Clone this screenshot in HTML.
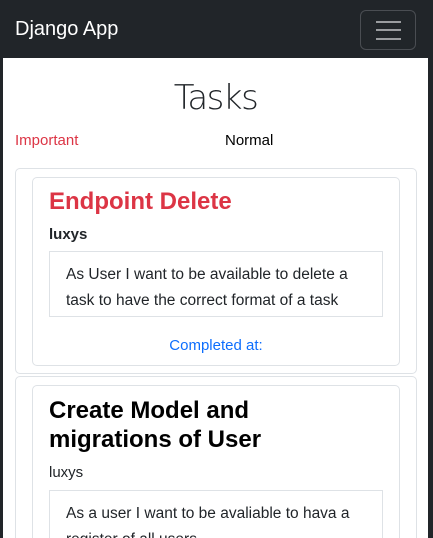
<!DOCTYPE html>
<html><head><style>
*{box-sizing:border-box;margin:0;padding:0}
html,body{width:433px;height:538px;overflow:hidden;background:#212529;font-family:"Liberation Sans",sans-serif}
.nav{height:58px;position:relative}
.brand{position:absolute;left:15px;top:18px;color:#fff;font-size:20px}
.tog{position:absolute;left:360px;top:10px;width:56px;height:40px;border:1px solid #4a4d52;border-radius:6px}
.tog i{position:absolute;left:15px;width:25px;height:2px;background:#9a9c9f}
.main{position:absolute;left:3px;top:58px;width:425px;height:480px;background:#fff;overflow:hidden}
h1{position:absolute;left:0;width:100%;text-align:center;top:20px;font-size:34px;color:#212529;font-family:"DejaVu Sans",sans-serif;font-weight:200;letter-spacing:-1.5px}
.imp{position:absolute;left:12px;top:74px;color:#dc3545;font-size:15px}
.nor{position:absolute;left:222px;top:74px;color:#000;font-size:15px}
.oc{position:absolute;left:12px;width:402px;border:1px solid #dee2e6;border-radius:5px}
.ic{position:absolute;left:16px;width:368px;border:1px solid #dee2e6;border-radius:5px}
.t{position:absolute;left:16px;font-weight:bold;font-size:24px;line-height:29px}
.u{position:absolute;left:16px;font-size:15px;color:#212529}
.d{position:absolute;left:16px;width:334px;border:1px solid #dee2e6;padding:10px 16px;font-size:15.5px;line-height:26px;color:#212529}
</style></head><body>
<div class="nav"><div class="brand">Django App</div><div class="tog"><i style="top:10px"></i><i style="top:18px"></i><i style="top:27px"></i></div></div>
<div class="main">
<h1>Tasks</h1>
<div class="imp">Important</div><div class="nor">Normal</div>
<div class="oc" style="top:110px;height:206px">
 <div class="ic" style="top:8px;height:189px">
  <div class="t" style="top:9px;color:#dc3545">Endpoint Delete</div>
  <div class="u" style="top:48px;font-weight:bold">luxys</div>
  <div class="d" style="top:73px;height:66px">As User I want to be available to delete a task to have the correct format of a task</div>
  <div style="position:absolute;top:159px;width:100%;text-align:center;color:#0d6efd;font-size:15px">Completed at:</div>
 </div>
</div>
<div class="oc" style="top:318px;height:300px">
 <div class="ic" style="top:8px;height:280px">
  <div class="t" style="top:10px;color:#000">Create Model and<br>migrations of User</div>
  <div class="u" style="top:78px">luxys</div>
  <div class="d" style="top:104px;height:80px">As a user I want to be avaliable to hava a register of all users</div>
 </div>
</div>
</div>
</body></html>
